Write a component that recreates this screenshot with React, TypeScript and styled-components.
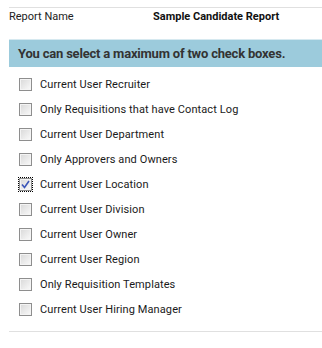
import React from "react";
import styled, { createGlobalStyle } from "styled-components";

const Global = createGlobalStyle`
  html, body { margin: 0; padding: 0; background: #fff; }
  body { font-family: Roboto, "Liberation Sans", sans-serif; color: #222; }
`;

const Page = styled.div`
  width: 322px;
  height: 348px;
  padding: 7px 0 0 9px;
  box-sizing: border-box;
`;

const HeaderRow = styled.div`
  border-top: 1px solid #e0e0e0;
  display: grid;
  grid-template-columns: 144px 1fr;
  height: 32px;
  padding-top: 2px;
  box-sizing: border-box;
  font-size: 11px;
  line-height: 14px;
`;

const Label = styled.div`
  color: #222;
`;

const Value = styled.div`
  font-weight: bold;
  color: #111;
`;

const Banner = styled.div`
  background: #9ccbdc;
  border-top: 1px solid #d6e9f0;
  height: 27px;
  display: flex;
  align-items: center;
  padding-left: 9px;
  font-size: 13px;
  letter-spacing: -0.2px;
  font-weight: bold;
  color: #333;
`;

const List = styled.div`
  display: flex;
  flex-direction: column;
  gap: 12px;
  padding: 11px 0 0 10px;
`;

const Row = styled.label`
  display: flex;
  align-items: center;
  height: 13px;
  font-size: 11px;
  letter-spacing: 0.1px;
  color: #1a1a1a;
`;

const Box = styled.span<{ $checked?: boolean }>`
  width: 11px;
  height: 11px;
  border: 1px solid #8e8e8e;
  background: linear-gradient(135deg, #d8d8d8 0%, #f0f0f0 70%, #fafafa 100%);
  box-shadow: inset 0 0 0 1px #f4f4f4;
  margin-right: 8px;
  position: relative;
  flex: none;
  ${(p) => (p.$checked ? `outline: 1px dotted #000; outline-offset: 0px;` : "")}
`;

const Check = styled.svg`
  position: absolute;
  left: 1px;
  top: 1px;
`;

const Footer = styled.div`
  margin-top: 15px;
  border-top: 1px solid #e0e0e0;
`;

const items = [
  "Current User Recruiter",
  "Only Requisitions that have Contact Log",
  "Current User Department",
  "Only Approvers and Owners",
  "Current User Location",
  "Current User Division",
  "Current User Owner",
  "Current User Region",
  "Only Requisition Templates",
  "Current User Hiring Manager",
];

export default function App() {
  return (
    <>
      <Global />
      <Page>
        <HeaderRow>
          <Label>Report Name</Label>
          <Value>Sample Candidate Report</Value>
        </HeaderRow>
        <Banner>You can select a maximum of two check boxes.</Banner>
        <List>
          {items.map((t) => {
            const checked = t === "Current User Location";
            return (
              <Row key={t}>
                <Box $checked={checked}>
                  {checked && (
                    <Check width="9" height="9" viewBox="0 0 9 9">
                      <path d="M1 4.5 L3.5 7.5 L8 1" fill="none" stroke="#3a55b8" strokeWidth="1.6" />
                    </Check>
                  )}
                </Box>
                {t}
              </Row>
            );
          })}
        </List>
        <Footer />
      </Page>
    </>
  );
}
